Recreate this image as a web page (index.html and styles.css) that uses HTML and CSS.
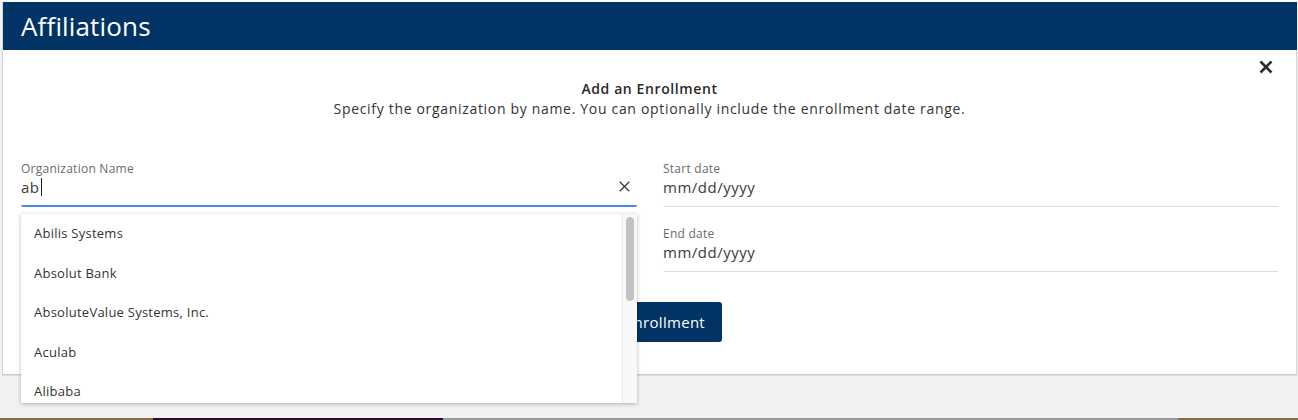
FILE: index.html
```html
<!DOCTYPE html>
<html>
<head>
<meta charset="utf-8">
<link rel="stylesheet" href="styles.css">
</head>
<body>
<div class="page">
  <section class="card">
    <header class="card-header">Affiliations</header>
    <div class="card-body">
      <button class="close" aria-label="Close">
        <svg width="14" height="14" viewBox="0 0 14 14"><path d="M1.5 1.5 L12.5 12.5 M12.5 1.5 L1.5 12.5" stroke="#2b2b2b" stroke-width="2.6" stroke-linecap="butt"/></svg>
      </button>
      <div class="intro">
        <div class="intro-title">Add an Enrollment</div>
        <div class="intro-sub">Specify the organization by name. You can optionally include the enrollment date range.</div>
      </div>
      <div class="form">
        <div class="col">
          <div class="field field-focus">
            <label class="field-label">Organization Name</label>
            <div class="field-input">
              <span class="value">ab<span class="caret"></span></span>
              <svg class="clear" width="11" height="11" viewBox="0 0 11 11"><path d="M0.7 0.7 L10.3 10.3 M10.3 0.7 L0.7 10.3" stroke="#3a3a3a" stroke-width="1.3"/></svg>
            </div>
            <ul class="dropdown">
              <li>Abilis Systems</li>
              <li>Absolut Bank</li>
              <li>AbsoluteValue Systems, Inc.</li>
              <li>Aculab</li>
              <li class="partial">Alibaba</li>
              <div class="scrollbar"><div class="thumb"></div></div>
            </ul>
          </div>
        </div>
        <div class="col">
          <div class="field">
            <label class="field-label">Start date</label>
            <div class="field-input"><span class="value">mm/dd/yyyy</span></div>
          </div>
          <div class="field field-second">
            <label class="field-label">End date</label>
            <div class="field-input"><span class="value">mm/dd/yyyy</span></div>
          </div>
        </div>
      </div>
      <div class="actions">
        <button class="btn-primary">Add Enrollment</button>
      </div>
    </div>
  </section>
  <div class="taskbar"></div>
</div>
</body>
</html>
```
FILE: styles.css
```css
* { box-sizing: border-box; }
html, body { margin: 0; padding: 0; }
body {
  background: #f1f2f1;
  font-family: "Open Sans", "Noto Sans", sans-serif;
  color: #2e2e2e;
  height: 420px;
  overflow: hidden;
}
.page {
  height: 420px;
  display: flex;
  flex-direction: column;
  padding-top: 2px;
  background: linear-gradient(#fbfbfb, #fbfbfb) top/100% 2px no-repeat, #f1f2f1;
}
.card {
  margin: 0 1px 0 2px;
  background: #fff;
  border-left: 1px solid #d6d6d6;
  border-right: 1px solid #d6d6d6;
  border-bottom: 1px solid #c9c9c9;
  box-shadow: 0 1px 1px rgba(0,0,0,0.08);
}
.card-header {
  height: 48px;
  background: #013364;
  color: #fff;
  font-size: 26px;
  line-height: 48px;
  letter-spacing: 0.15px;
  padding-left: 18px;
  margin: 0 -1px 0 0;
}
.card-body {
  position: relative;
  height: 324px;
  padding: 29px 18px 0 18px;
}
.close {
  position: absolute;
  top: 10px;
  right: 23px;
  width: 14px;
  height: 14px;
  padding: 0;
  border: 0;
  background: none;
  display: flex;
}
.intro { text-align: center; }
.intro-title {
  font-size: 14px;
  font-weight: 600;
  line-height: 20px;
  letter-spacing: 0.6px;
  color: #2a2a2a;
}
.intro-sub {
  font-size: 14px;
  line-height: 20px;
  letter-spacing: 0.68px;
  color: #333;
}
.form {
  margin-top: 43px;
  display: grid;
  grid-template-columns: 616px 616px;
  column-gap: 26px;
}
.field { position: relative; }
.field-second { margin-top: 20px; }
.field-label {
  display: block;
  font-size: 12px;
  line-height: 14px;
  letter-spacing: 0.25px;
  color: #6b6b6b;
}
.field-input {
  display: flex;
  align-items: center;
  justify-content: space-between;
  height: 31px;
  padding-bottom: 9px;
  border-bottom: 1px solid #dcdcdc;
  border-radius: 0 0 2px 2px;
}
.value {
  font-size: 15px;
  line-height: 22px;
  letter-spacing: 0.5px;
  color: #3a3a3a;
  display: flex;
  align-items: center;
}
.caret {
  display: inline-block;
  width: 1px;
  height: 18px;
  background: #222;
  margin-left: 1px;
}
.field-focus .field-input {
  height: 31px;
  padding-bottom: 8px;
  border-bottom: 2px solid #4a87e8;
}
.clear { margin-right: 7px; }
.dropdown {
  position: absolute;
  top: 52px;
  left: 0;
  width: 616px;
  height: 189px;
  margin: 0;
  padding: 0;
  list-style: none;
  background: #fff;
  box-shadow: 0 1px 4px rgba(0,0,0,0.28);
  overflow: hidden;
  z-index: 5;
}
.dropdown li {
  height: 39.5px;
  display: flex;
  align-items: center;
  padding-left: 13px;
  padding-bottom: 1px;
  font-size: 13px;
  letter-spacing: 0.25px;
  color: #333;
}
.scrollbar {
  position: absolute;
  top: 0;
  right: 0;
  width: 15px;
  height: 100%;
  background: #f8f8f8;
  border-left: 1px solid #ececec;
}
.thumb {
  position: absolute;
  top: 3px;
  left: 3px;
  width: 8px;
  height: 84px;
  border-radius: 4px;
  background: #c2c2c2;
}
.actions {
  display: flex;
  justify-content: center;
  margin-top: 30px;
}
.btn-primary {
  height: 40px;
  width: 146px;
  padding: 0;
  border: 0;
  border-radius: 3px;
  background: #013364;
  color: #fff;
  font-family: inherit;
  font-size: 15px;
  letter-spacing: 0.3px;
  margin-left: -2px;
}
.taskbar {
  margin-top: auto;
  height: 2px;
  background: linear-gradient(to right, #8b6a3e 0 153px, #2b0b28 153px 443px, #9a9a9a 443px 1178px, #8b6a3e 1178px);
}
```
